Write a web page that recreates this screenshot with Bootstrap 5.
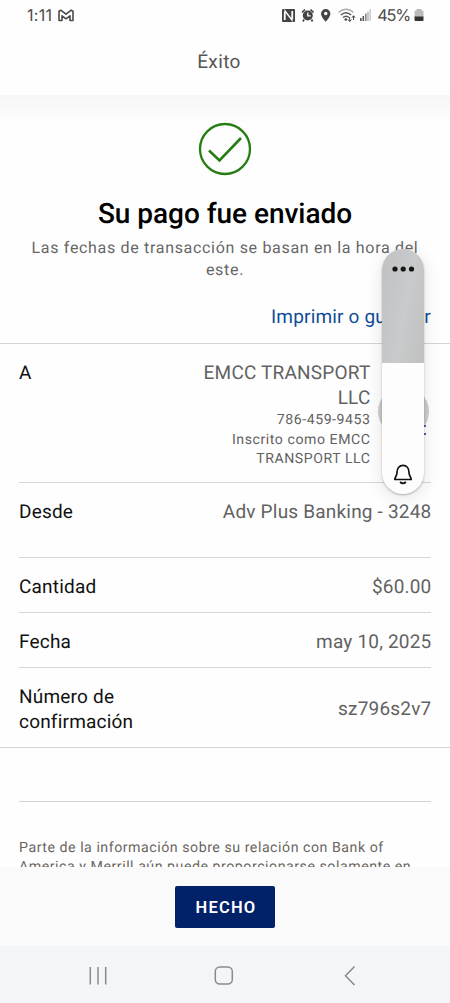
<!DOCTYPE html>
<html lang="es">
<head>
<meta charset="utf-8">
<meta name="viewport" content="width=device-width, initial-scale=1">
<title>Éxito</title>
<link href="https://cdn.jsdelivr.net/npm/bootstrap@5.3.0/dist/css/bootstrap.min.css" rel="stylesheet">
<style>
  body { font-family: Roboto, "Liberation Sans", sans-serif; background: #fefefe; color: #111; text-rendering: geometricPrecision; }
  .screen { height: 1003px; }
  .status { height: 30px; padding: 0 25px 0 27px; color: #4a4a4a; font: 400 16px/30px Inter, sans-serif; }
  .clock { letter-spacing: .3px; }
  .topbar { height: 65px; padding-right: 12px; font-size: 19px; line-height: 63px; letter-spacing: .4px; color: #555; }
  .content { background: linear-gradient(#f6f6f6, #fefefe 30px); }
  .tick { margin-top: 27px; height: 54px; }
  h1 { font-size: 28px; font-weight: 500; line-height: 36px; margin: 20px 0 0; color: #000; letter-spacing: -.03px; }
  .note { font-size: 16px; line-height: 22px; letter-spacing: .68px; color: #666; margin: 5px 24px 0; }
  .print { font-size: 19px; line-height: 24px; letter-spacing: .18px; color: #0f4c97; margin: 24px 19px 14px; }
  .rule { border-top: 1px solid #d3d3d3; }
  .item { margin: 0 19px; border-bottom: 1px solid #d6d6d6; padding-top: 16px; font-size: 19px; line-height: 25px; letter-spacing: .2px; }
  .value { color: #626262; margin-right: -.5px; }
  .payee { margin-right: 60.5px; }
  .minor { font-size: 14.1px; line-height: 19px; letter-spacing: .56px; padding-top: 1px; }
  .enrolled { margin-top: 1px; }
  .legal { margin: 37px 19px 0; font-size: 14.2px; line-height: 19px; letter-spacing: .52px; color: #6b665f; }
  .actions { height: 79px; background: #fafafa; }
  .done { width: 100px; height: 42px; border-radius: 2px; background: #012169; color: #fff; font-size: 16.5px; font-weight: 600; letter-spacing: 1.2px; padding: 3px 0 0 2px; }
  .sysnav { height: 57px; background: #f4f5f8; }
  .contact { left: 378px; top: 386px; width: 51px; height: 51px; background: #ccc; }
  .dots { left: 423px; top: 425px; width: 3px; height: 10px; border: solid #6257a0; border-width: 2px 0; }
  .volume { left: 382px; top: 249px; width: 42px; height: 245px; border-radius: 21px; background: #fdfdfd; box-shadow: 0 1px 2px #0004, 0 4px 18px #0000001c; }
  .level { height: 114px; background: linear-gradient(100deg, #c1c1c2, #c8cacb 55%, #c0c0c0); }
</style>
</head>
<body>
<div class="screen d-flex flex-column position-relative overflow-hidden">
  <div class="status d-flex align-items-center justify-content-between flex-shrink-0">
    <div class="d-flex align-items-center">
      <span class="clock">1:11</span>
      <svg style="margin-left:6px" width="16" height="13" viewBox="0 0 16 13" fill="none" stroke="#4a4a4a" stroke-width="1.600" stroke-linejoin="round"><path d="M1 2.300 2.800 1.200 8 5.200l5.200-4L15 2.300v9.200h-3V6.800L8 9.800 4 6.800v4.700H1z"/></svg>
    </div>
    <svg width="144" height="20" viewBox="281 5 144 20">
      <rect x="282" y="9" width="13" height="13" rx="1" fill="#444"/>
      <path d="M285 20V11l7 9V11M284.500 12v8M292.500 11v8" fill="none" stroke="#fff" stroke-width="1.300"/>
      <circle cx="307.800" cy="15.500" r="5" fill="#444"/>
      <path d="M302 12.500l3-3M310.500 9.500l3 3M304 19.500l-1 2M311.500 19.500l1 2" stroke="#444" stroke-width="1.700"/>
      <path d="M307.800 12.500v3.300h2.800" fill="none" stroke="#fff" stroke-width="1.300"/>
      <path d="M325.700 9a4.700 4.700 0 0 0-4.700 4.700c0 3.200 4.700 8 4.700 8s4.700-4.800 4.700-8A4.700 4.700 0 0 0 325.700 9z" fill="#444"/><circle cx="325.700" cy="13.500" r="1.700" fill="#fff"/>
      <g fill="none" stroke="#555" stroke-width="1.500"><path d="M338.500 12.500q7.500-6.500 15 0" stroke="#aaa"/><path d="M340.800 15q5.200-4.600 10.400 0M343 17.500q3-2.600 6 0"/></g>
      <circle cx="345.800" cy="19.500" r="1.300" fill="#444"/>
      <path d="M349.700 17v4M348 19.500l1.700 2 1.700-2M353.500 20v-4M352 17.700l1.500-2 1.500 2" fill="none" stroke="#444"/>
      <g fill="#555"><rect x="360" y="18" width="1.600" height="3"/><rect x="362.500" y="16" width="1.600" height="5"/><rect x="365" y="13.500" width="1.600" height="7.500" fill="#888"/><rect x="367.200" y="11.500" width="1.600" height="9.500" fill="#bbb"/><rect x="369.400" y="9" width="1.600" height="12" fill="#ccc"/></g>
      <text x="377.200" y="21" font-size="16.300" textLength="34" fill="#4a4a4a">45%</text>
      <path d="M416.500 9h5v1.500h1q1 0 1 1V17h-9v-5.500q0-1 1-1h1z" fill="#bbb"/><path d="M414.500 16.500h9V20q0 1-1 1h-7q-1 0-1-1z" fill="#333"/>
    </svg>
  </div>
  <header class="topbar text-center flex-shrink-0">Éxito</header>
  <main class="content flex-grow-1 overflow-hidden">
    <div class="tick text-center">
      <svg class="d-block mx-auto" width="54" height="54" viewBox="0 0 54 54" fill="none" stroke="#267d12"><circle cx="27" cy="27" r="25" stroke-width="2.300"/><path d="M11 28.500 21.500 38.500 43 16" stroke-width="2.600"/></svg>
    </div>
    <h1 class="text-center">Su pago fue enviado</h1>
    <p class="note text-center">Las fechas de transacción se basan en la hora del este.</p>
    <div class="print text-end">Imprimir o guardar</div>
    <div class="rule"></div>
    <div class="item d-flex justify-content-between" style="height:139px">
      <div>A</div>
      <div class="value payee text-end">EMCC TRANSPORT<br>LLC<div class="minor">786-459-9453<div class="enrolled">Inscrito como EMCC<br>TRANSPORT LLC</div></div></div>
    </div>
    <div class="item d-flex justify-content-between" style="height:75px"><div>Desde</div><div class="value">Adv Plus Banking - 3248</div></div>
    <div class="item d-flex justify-content-between" style="height:55px"><div>Cantidad</div><div class="value">$60.00</div></div>
    <div class="item d-flex justify-content-between" style="height:55px"><div>Fecha</div><div class="value">may 10, 2025</div></div>
    <div class="item d-flex justify-content-between border-0" style="height:79px"><div>Número de<br>confirmación</div><div class="value" style="padding-top:12px">sz796s2v7</div></div>
    <div class="rule"></div>
    <div class="rule mx-auto" style="margin-top:53px;width:412px"></div>
    <p class="legal text-nowrap">Parte de la información sobre su relación con Bank of<br>America y Merrill aún puede proporcionarse solamente en</p>
  </main>
  <footer class="actions d-flex align-items-center justify-content-center flex-shrink-0">
    <button class="btn done border-0">HECHO</button>
  </footer>
  <nav class="sysnav flex-shrink-0">
    <svg class="d-block" width="450" height="57" viewBox="0 946 450 57" fill="none" stroke="#8a8a8c" stroke-width="1.500"><path d="M90.300 967v17.500M98 967v17.500M105.700 967v17.500M354.500 966.500l-9 9.200 9 9.200"/><rect x="215.300" y="967" width="17" height="17" rx="4.500"/></svg>
  </nav>
  <div class="contact position-absolute rounded-circle"></div>
  <div class="dots position-absolute"></div>
  <div class="volume position-absolute overflow-hidden">
    <div class="level"><svg class="d-block" width="42" height="40" fill="#151515"><circle cx="13" cy="20" r="2.600"/><circle cx="21.200" cy="20" r="2.600"/><circle cx="29.500" cy="20" r="2.600"/></svg></div>
    <svg class="d-block mx-auto" style="margin-top:99px" width="20" height="24" viewBox="0 0 20 24" fill="none" stroke="#111" stroke-width="1.700" stroke-linejoin="round"><path d="M4 10.500C4 6 6.500 3.300 10 3.300s6 2.700 6 7.200c0 3.500 2.200 4.500 2.200 7H1.800C1.800 15 4 14 4 10.500zM7 20q3 2.700 6 0"/></svg>
  </div>
</div>
<script src="https://cdn.jsdelivr.net/npm/bootstrap@5.3.0/dist/js/bootstrap.bundle.min.js"></script>
</body>
</html>
